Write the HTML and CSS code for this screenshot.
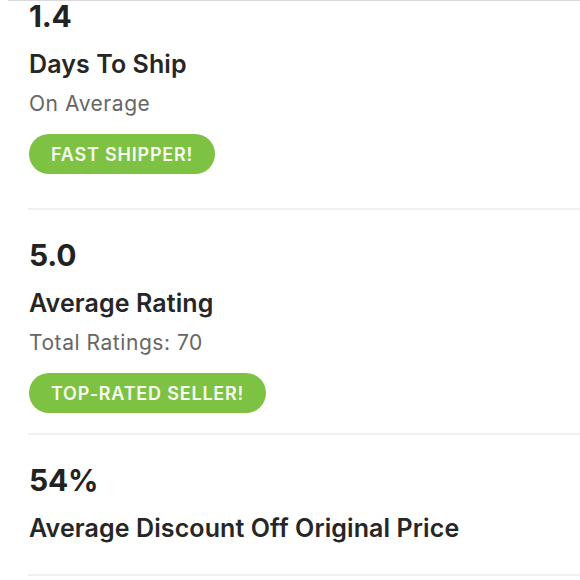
FILE: index.html
```html
<!DOCTYPE html>
<html lang="en">
<head>
<meta charset="utf-8">
<title>Seller stats</title>
<link rel="stylesheet" href="styles.css">
</head>
<body>
<div class="top-rule"></div>
<main class="stats">
  <section class="stat stat--first">
    <div class="stat-value">1.4</div>
    <div class="stat-label">Days To Ship</div>
    <div class="stat-sub">On Average</div>
    <span class="badge">FAST SHIPPER!</span>
  </section>
  <section class="stat stat--tight">
    <div class="stat-value">5.0</div>
    <div class="stat-label">Average Rating</div>
    <div class="stat-sub">Total Ratings: 70</div>
    <span class="badge">TOP-RATED SELLER!</span>
  </section>
  <section class="stat">
    <div class="stat-value">54%</div>
    <div class="stat-label">Average Discount Off Original Price</div>
  </section>
</main>
</body>
</html>
```
FILE: styles.css
```css
* {
  box-sizing: border-box;
}

html, body {
  margin: 0;
  padding: 0;
  background: #ffffff;
}

body {
  font-family: Inter, Lato, "Liberation Sans", sans-serif;
  color: #222222;
}

.top-rule {
  height: 1px;
  margin-left: 8px;
  background: #d9d9d9;
}

.stats {
  display: flex;
  flex-direction: column;
  margin-left: 28px;
}

.stat {
  display: flex;
  flex-direction: column;
  align-items: flex-start;
  padding: 30px 0 34px 1px;
  border-bottom: 2px solid #f1f1f1;
}

.stat--first {
  padding-top: 0;
}

.stat--tight {
  padding-bottom: 20px;
}

.stat-value {
  font-size: 30px;
  line-height: 30px;
  font-weight: 700;
  letter-spacing: -0.2px;
  color: #222222;
}

.stat-label {
  margin-top: 21px;
  font-size: 25px;
  line-height: 24px;
  font-weight: 600;
  letter-spacing: 0.1px;
  color: #262626;
}

.stat-sub {
  margin-top: 18px;
  font-size: 21px;
  line-height: 20px;
  font-weight: 400;
  letter-spacing: 0.55px;
  color: #666666;
}

.badge {
  display: inline-flex;
  align-items: center;
  height: 40px;
  margin-top: 20px;
  padding: 0 22px;
  border-radius: 20px;
  background: #7ec243;
  color: #f7fbf1;
  font-size: 18px;
  font-weight: 600;
  letter-spacing: 0.8px;
}
```
